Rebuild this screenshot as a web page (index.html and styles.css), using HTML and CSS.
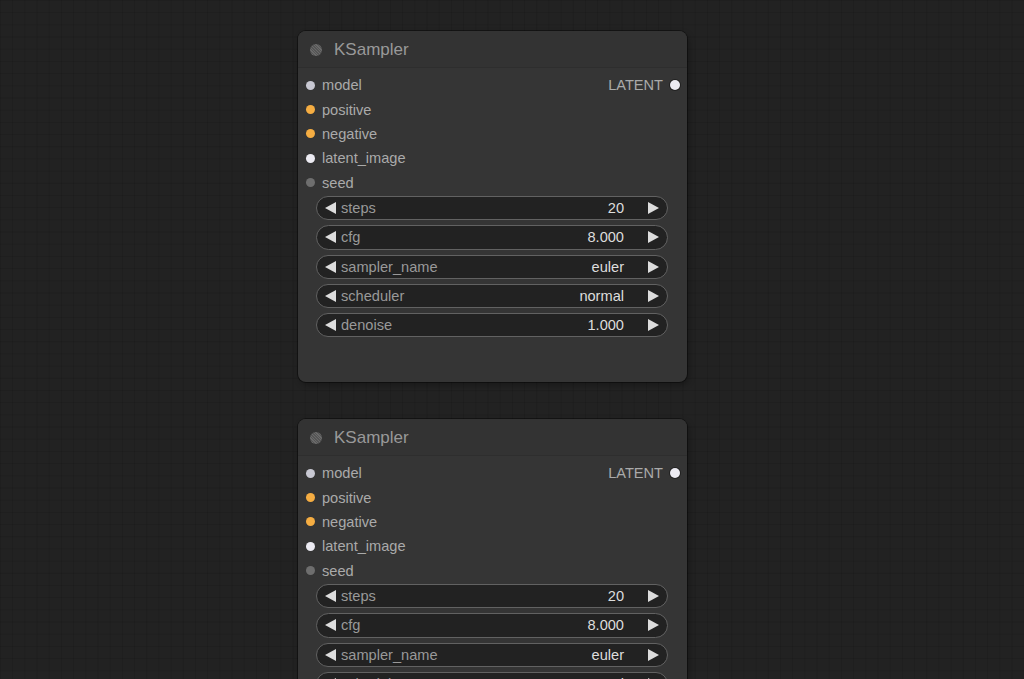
FILE: index.html
```html
<!DOCTYPE html>
<html lang="en">
  <head>
    <meta charset="UTF-8" />
    <meta name="viewport" content="width=device-width, initial-scale=1.0" />
    <title>KSampler</title>

    <link rel="stylesheet" href="styles.css">
  </head>
  <body>
    <div class="canvas">
      <div class="node">
        <div class="title"><span class="title-dot"></span>KSampler</div>
        <div class="slots">
          <div class="slot"><span class="dot model"></span>model<span class="output">LATENT<span class="dot latent-out"></span></span></div>
          <div class="slot"><span class="dot cond"></span>positive</div>
          <div class="slot"><span class="dot cond"></span>negative</div>
          <div class="slot"><span class="dot latent"></span>latent_image</div>
          <div class="slot"><span class="dot widget-in"></span>seed</div>
        </div>
        <div class="widgets">
          <div class="widget"><span class="arrow left"></span><span class="name">steps</span><span class="value">20</span><span class="arrow right"></span></div>
          <div class="widget"><span class="arrow left"></span><span class="name">cfg</span><span class="value">8.000</span><span class="arrow right"></span></div>
          <div class="widget"><span class="arrow left"></span><span class="name">sampler_name</span><span class="value">euler</span><span class="arrow right"></span></div>
          <div class="widget"><span class="arrow left"></span><span class="name">scheduler</span><span class="value">normal</span><span class="arrow right"></span></div>
          <div class="widget"><span class="arrow left"></span><span class="name">denoise</span><span class="value">1.000</span><span class="arrow right"></span></div>
        </div>
      </div>

      <div class="node">
        <div class="title"><span class="title-dot"></span>KSampler</div>
        <div class="slots">
          <div class="slot"><span class="dot model"></span>model<span class="output">LATENT<span class="dot latent-out"></span></span></div>
          <div class="slot"><span class="dot cond"></span>positive</div>
          <div class="slot"><span class="dot cond"></span>negative</div>
          <div class="slot"><span class="dot latent"></span>latent_image</div>
          <div class="slot"><span class="dot widget-in"></span>seed</div>
        </div>
        <div class="widgets">
          <div class="widget"><span class="arrow left"></span><span class="name">steps</span><span class="value">20</span><span class="arrow right"></span></div>
          <div class="widget"><span class="arrow left"></span><span class="name">cfg</span><span class="value">8.000</span><span class="arrow right"></span></div>
          <div class="widget"><span class="arrow left"></span><span class="name">sampler_name</span><span class="value">euler</span><span class="arrow right"></span></div>
          <div class="widget"><span class="arrow left"></span><span class="name">scheduler</span><span class="value">normal</span><span class="arrow right"></span></div>
          <div class="widget"><span class="arrow left"></span><span class="name">denoise</span><span class="value">1.000</span><span class="arrow right"></span></div>
        </div>
      </div>
    </div>
  </body>
</html>
```

FILE: styles.css
```css
*,
*::before,
*::after {
  box-sizing: border-box;
  margin: 0;
  padding: 0;
}

body {
  height: 100vh;
  overflow: hidden;
  background-color: #222;
  background-image:
    linear-gradient(90deg, rgba(0, 0, 0, 0.1) 1px, transparent 1px),
    linear-gradient(rgba(0, 0, 0, 0.1) 1px, transparent 1px);
  background-size: 12.2px 12.2px;
  font-family: "Liberation Sans", Arial, sans-serif;
}

.canvas {
  display: flex;
  flex-direction: column;
  gap: 37px;
  padding: 31px 0 0 298px;
}

.node {
  width: 389px;
  height: 351px;
  flex-shrink: 0;
  background: #353535;
  border-radius: 8px;
  box-shadow: 0 0 0 1px rgba(0, 0, 0, 0.4), 2px 3px 6px rgba(0, 0, 0, 0.3);
  overflow: hidden;
}

.title {
  height: 37px;
  display: flex;
  align-items: center;
  gap: 12px;
  padding: 1px 0 0 12px;
  background: #333;
  border-bottom: 1px solid #2e2e2e;
  color: #999;
  font-size: 17px;
}

.title-dot {
  width: 12px;
  height: 12px;
  border-radius: 50%;
  background: repeating-linear-gradient(45deg, #6a6a6a 0 1px, #555 1px 2px);
}

.slots {
  padding-top: 5px;
}

.slot {
  height: 24.4px;
  display: flex;
  align-items: center;
  padding-left: 8px;
  color: #aaa;
  font-size: 14.6px;
}

.dot {
  width: 9px;
  height: 9px;
  border-radius: 50%;
  margin-right: 7px;
  flex-shrink: 0;
}

.model { background: #c8c8d2; }
.cond { background: #f5ad42; }
.latent { background: #ecebf2; }
.widget-in { background: #6e6e6e; }

.output {
  margin-left: auto;
  display: flex;
  align-items: center;
  padding-right: 7px;
}

.latent-out {
  margin: 0 0 0 7px;
  width: 10px;
  height: 10px;
  background: #ecebf2;
  box-shadow: 0 0 0 1px #222;
}

.widgets {
  display: flex;
  flex-direction: column;
  gap: 4.9px;
  padding: 1px 19px 0 18px;
}

.widget {
  height: 24.4px;
  display: flex;
  align-items: center;
  padding: 0 8px 0 8px;
  background: #222;
  border: 1px solid #626262;
  border-radius: 13px;
  font-size: 14.6px;
}

.arrow {
  width: 0;
  height: 0;
  border-top: 6px solid transparent;
  border-bottom: 6px solid transparent;
}

.arrow.left {
  border-right: 11px solid #ddd;
  margin-right: 5px;
}

.arrow.right {
  border-left: 11px solid #ddd;
  margin-left: 24px;
}

.name {
  color: #999;
}

.value {
  margin-left: auto;
  color: #ddd;
}
```
